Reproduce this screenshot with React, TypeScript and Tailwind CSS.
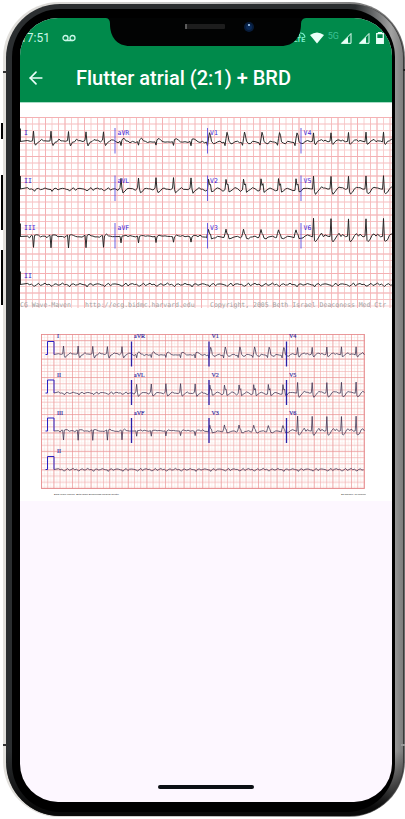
import { ArrowLeft } from "lucide-react";

type Point = [number, number];

// one beat per lead: x offset from the R wave, height above the baseline
const BEATS: Record<string, Point[]> = {
  I: [[-6, 1], [-3, 0], [-1, 1], [0, 10], [1, -1], [2, -4], [4, -1], [6, 0], [8, 2], [10, 1]],
  aVR: [[-6, 0], [-3, -1], [-1, 0], [0, -4], [1, 2], [3, 3], [5, 1], [7, 0], [9, -1]],
  V1: [[-6, 0], [-4, -1], [-2, -1], [-1, -4], [0, 3], [1, 9], [2, 6], [3, 0], [5, -2], [7, -2], [9, 0]],
  V4: [[-6, 1], [-3, 0], [-1, 0], [0, 9], [1, -2], [2, -3], [4, 0], [6, 1], [8, 2], [10, 0]],
  II: [[-6, 1], [-4, 0], [-2, 0], [0, -1], [1, -2], [3, 0], [5, 1], [7, -1], [9, 0]],
  aVL: [[-6, 0], [-3, -1], [-1, 1], [0, 11], [1, 0], [2, -4], [4, -2], [6, 0], [8, 1], [10, 0]],
  V2: [[-6, 0], [-3, -2], [-1, -1], [0, 10], [1, 4], [2, 5], [3, -3], [5, -2], [7, 0], [9, 1]],
  V5: [[-6, 1], [-3, 0], [-1, 0], [0, 13], [1, -3], [2, -5], [4, -3], [6, 0], [8, 2], [10, 1]],
  III: [[-6, 0], [-4, -1], [-2, 1], [-1, 1], [0, -11], [1, 1], [3, 2], [5, 1], [7, 0], [9, 0]],
  aVF: [[-6, 0], [-3, 0], [-1, 0], [0, -6], [1, 0], [3, 1], [5, 1], [7, 0], [9, 1]],
  V3: [[-6, 0], [-3, -1], [-2, -1], [-1, 3], [0, 7], [1, 3], [2, 2], [3, -2], [5, -2], [7, -1], [9, 0]],
  V6: [[-6, 2], [-3, 0], [-1, 0], [0, 18], [1, -4], [2, -5], [4, -3], [6, 1], [8, 3], [10, 0]],
};

const ROWS = [
  ["I", "aVR", "V1", "V4"],
  ["II", "aVL", "V2", "V5"],
  ["III", "aVF", "V3", "V6"],
  ["II", "II", "II", "II"],
];

const BEAT_GAP = 35;
const BEAT_COUNT = 21;

function leadIndex(beat: number) {
  if (beat < 5) return 0;
  if (beat < 10) return 1;
  if (beat < 16) return 2;
  return 3;
}

// first = x of the first R wave, base = y of the baseline
function tracePoints(row: number, start: number, first: number, base: number, sx: number, sy: number) {
  const points = [`${start},${base}`];
  for (let i = 0; i < BEAT_COUNT; i++) {
    BEATS[ROWS[row][leadIndex(i)]].forEach(([dx, dy], j) => {
      const wobble = Math.sin(i * 5.3 + j * 2.7 + row) * 0.8;
      const x = first + (i * BEAT_GAP + dx * 2) * sx;
      const y = base - (dy * 2 + wobble) * sy;
      points.push(`${x.toFixed(1)},${y.toFixed(1)}`);
    });
  }
  return points.join(" ");
}

function range(from: number, to: number, step: number) {
  const out: number[] = [];
  for (let v = from; v <= to; v += step) out.push(v);
  return out;
}

function WaveMavenStrip() {
  const bases = [49, 144, 239, 335];
  const splits = [190, 375, 562];
  return (
    <svg viewBox="0 0 744 384" className="block w-full" role="img" aria-label="ECG">
      <g stroke="#f9cfcf" strokeWidth="2">
        {range(12, 744, 13).map((x) => <path key={`v${x}`} d={`M${x} 0V382`} />)}
        {range(1, 384, 13).map((y) => <path key={`h${y}`} d={`M0 ${y}H744`} />)}
      </g>
      <g stroke="#f2a4a8" strokeWidth="2" opacity="0.7">
        {range(12, 744, 39).map((x) => <path key={`v${x}`} d={`M${x} 0V382`} />)}
        {range(38, 744, 39).map((x) => <path key={`w${x}`} d={`M${x} 0V382`} opacity="0.5" />)}
        {range(1, 384, 39).map((y) => <path key={`h${y}`} d={`M0 ${y}H744`} />)}
        {range(14, 384, 39).map((y) => <path key={`g${y}`} d={`M0 ${y}H744`} opacity="0.4" />)}
      </g>
      {bases.map((base, row) => (
        <g key={base}>
          <path d={`M1 ${base - 26}V${base}`} stroke="#333" strokeWidth="2" />
          <polyline points={tracePoints(row, 0, 27, base, 1, 1)} fill="none" stroke="#222" strokeWidth="1.9" />
          {row < 3 && splits.map((x) => (
            <path key={x} d={`M${x} ${base - 27}v51`} stroke="#5547e0" strokeWidth="2" opacity="0.85" />
          ))}
          <g fill="#3b22d6" fontFamily="DejaVu Sans Mono, monospace" fontSize="13">
            <text x="8" y={base - 13}>{ROWS[row][0]}</text>
            {row < 3 && splits.map((x, i) => (
              <text key={x} x={x + 5} y={base - 13}>{ROWS[row][i + 1]}</text>
            ))}
          </g>
        </g>
      ))}
      <g fill="#a3a3a3" fontFamily="DejaVu Sans Mono, monospace" fontSize="13">
        <text x="0" y="380">CG Wave-Maven</text>
        <text x="130" y="380">http://ecg.bidmc.harvard.edu</text>
        <text x="380" y="380">Copyright, 2005 Beth Israel Deaconess Med Ctr</text>
      </g>
    </svg>
  );
}

function PaperStrip() {
  const bases = [41, 118, 194, 271];
  const splits = [181, 336, 491];
  return (
    <svg viewBox="0 0 650 326" className="block w-full" role="img" aria-label="ECG">
      <g stroke="#fbe6e2" strokeWidth="1">
        {range(7, 648, 6.2).map((x) => <path key={`v${x}`} d={`M${x} 1V309`} />)}
        {range(7, 309, 6.2).map((y) => <path key={`h${y}`} d={`M1 ${y}H647`} />)}
      </g>
      <g stroke="#f3aeae" strokeWidth="1.6">
        {range(1, 648, 12.4).map((x) => <path key={`v${x}`} d={`M${x} 1V309`} opacity="0.75" />)}
        {range(1, 309, 12.3).map((y) => <path key={`h${y}`} d={`M1 ${y}H647`} opacity="0.75" />)}
      </g>
      <g stroke="#e88a8c" strokeWidth="1.6">
        {range(25.8, 648, 37.2).map((x) => <path key={`v${x}`} d={`M${x} 1V309`} opacity="0.4" />)}
        {range(13.3, 309, 36.9).map((y) => <path key={`h${y}`} d={`M1 ${y}H647`} opacity="0.5" />)}
      </g>
      <rect x="1" y="1" width="646" height="308" fill="none" stroke="#e58b8d" strokeWidth="1.6" />
      {bases.map((base, row) => (
        <g key={base}>
          <polyline points={tracePoints(row, 26, 45, base, 0.836, 0.82)} fill="none" stroke="#3a2d4d" strokeWidth="1.5" />
          <path d={`M9 ${base}H13V${base - 26}H26V${base}`} fill="none" stroke="#2a22c4" strokeWidth="2" />
          {row < 3 && splits.map((x) => (
            <path key={x} d={`M${x} ${base - 26}v50`} stroke="#2a1ea8" strokeWidth="2.6" />
          ))}
          <g fill="#2c1f9e" stroke="#2c1f9e" strokeWidth="0.3" fontFamily="Liberation Serif, serif" fontSize="12">
            <text x="32" y={base - 33}>{ROWS[row][0]}</text>
            {row < 3 && splits.map((x, i) => (
              <text key={x} x={x + 5} y={base - 33}>{ROWS[row][i + 1]}</text>
            ))}
          </g>
        </g>
      ))}
      <g fill="#222" fontFamily="Liberation Sans, sans-serif" fontSize="5">
        <text x="26" y="321">ECG Wave-Maven, Beth Israel Deaconess Medical Center</text>
        <text x="600" y="321">25 mm/sec, 10 mm/mV</text>
      </g>
    </svg>
  );
}

function StatusIcons() {
  return (
    <div className="flex items-center text-[#eafff8]">
      <div className="font-['Roboto',sans-serif] text-[7px] leading-[7px] font-bold text-[#7df0cf]">
        <svg viewBox="0 0 12 5" className="ml-auto h-[5px] w-3" fill="none" stroke="currentColor" strokeWidth="1.2">
          <path d="M2 1q4 0 4 4M6 1q4 0 5 4" />
        </svg>
        LTE
      </div>
      <svg viewBox="0 0 14 12" className="ml-1 h-3 w-3.5" fill="currentColor">
        <path d="M0 3Q7-2 14 3L7 11.500Z" />
      </svg>
      <span className="ml-1 h-4 font-['Roboto',sans-serif] text-[9px] leading-3 text-[#3cc296]">5G</span>
      <div className="ml-px flex gap-1.5">
        {[0, 1].map((n) => (
          <svg key={n} viewBox="0 0 12 12" className="size-3" fill="none" stroke="currentColor">
            <path d="M1.500 11.300H11V1.500Z" />
            <path d="M1 11.500H8V5Z" fill="currentColor" stroke="none" />
          </svg>
        ))}
        <svg viewBox="0 0 8 12" className="h-3 w-2" fill="none" stroke="currentColor">
          <path d="M2.500 1V0.500H5.500V1M0.700 1.700H7.300V11.300H0.700Z" strokeWidth="1.300" />
          <path d="M1 6H7V11H1Z" fill="currentColor" stroke="none" />
        </svg>
      </div>
    </div>
  );
}

function Notch() {
  return (
    <div className="absolute inset-x-0 top-0 flex justify-center">
      <svg viewBox="0 0 200 29" className="h-[29px] w-[200px]">
        <path d="M0-1V0Q4 0.500 4 6C4 19 11 28 24 28H175C188 28 195 19 195 6Q195 0.500 200 0V-1Z" fill="#020303" />
        <rect x="79" y="6" width="40" height="5" rx="1" fill="#1d1d1d" />
        <path d="M80 6V11" stroke="#999" strokeWidth="1" />
        <circle cx="143" cy="9" r="5" fill="#081c3a" />
        <circle cx="143" cy="9" r="3" fill="#0a2a58" />
        <circle cx="143" cy="7" r="1" fill="#b9dcff" />
      </svg>
    </div>
  );
}

export default function App() {
  return (
    <div className="relative flex min-h-screen flex-col bg-white pt-0.5 pb-0.5 pl-[3px]">
      {/* side buttons */}
      <div className="absolute top-[123px] left-px h-4 w-0.5 bg-black" />
      <div className="absolute top-[175px] left-px h-[55px] w-0.5 bg-black" />
      <div className="absolute top-[250px] left-px h-[55px] w-0.5 bg-black" />

      {/* antenna lines */}
      <div className="absolute top-[71px] left-[3px] h-0.5 w-1 bg-[#333]" />
      <div className="absolute top-[69px] right-0 h-0.5 w-0.5 bg-[#222]" />
      <div className="absolute bottom-[73px] left-[3px] h-0.5 w-1 bg-[#333]" />
      <div className="absolute right-0 bottom-[73px] h-0.5 w-1 bg-[#999]" />

      {/* metal rim, then glass edge, then bezel */}
      <div className="flex flex-1 flex-col rounded-[56px] bg-linear-to-r from-[#e2e0dc] via-[#c4c4c4] to-[#6c6c6c] pt-0.5 pr-px pb-px pl-[3px]">
        <div className="flex flex-1 flex-col rounded-[54px] border-r border-[#3a3a3a] bg-[linear-gradient(to_top,#0a0a0a_1%,transparent_8%),linear-gradient(to_right,#2b2e30_88%,#a2a2a2_97%,#7d7d7d_100%)] pt-[5px] pr-2 pb-1 pl-[6px]">
          <div className="flex flex-1 flex-col rounded-[48px] bg-black pt-[9px] pr-[3px] pb-[10px] pl-2">
            <div className="relative flex flex-1 flex-col overflow-hidden rounded-[38px] bg-[#fdf7ff]">
              <Notch />
              <header className="bg-[#008a4b] font-['Roboto',sans-serif] text-[#eafffa]">
                <div className="flex h-10 items-center justify-between pr-2">
                  <div className="flex items-center">
                    <span className="text-xs text-[#c9f7e8]">17:51</span>
                    <svg viewBox="0 0 14 8" className="ml-3 h-2 w-3.5" fill="none" stroke="#c9f7e8" strokeWidth="1.300">
                      <circle cx="3.500" cy="4" r="2.500" />
                      <circle cx="10.500" cy="4" r="2.500" />
                      <path d="M3.500 6.500H10.500" />
                    </svg>
                  </div>
                  <StatusIcons />
                </div>
                <div className="flex h-11 items-center pb-1 pl-1.5">
                  <button aria-label="Back" className="flex size-5 items-center justify-center">
                    <ArrowLeft size={20} strokeWidth={2} />
                  </button>
                  <h1 className="ml-[30px] text-xl font-medium whitespace-nowrap text-white">Flutter atrial (2:1) + BRD</h1>
                </div>
              </header>

              <main className="border-t border-[#a8dcc6] bg-white pt-3.5">
                <WaveMavenStrip />
                <div className="pt-[25px] pr-[26px] pb-1 pl-[21px]">
                  <PaperStrip />
                </div>
              </main>

              {/* home bar */}
              <div className="mt-auto flex justify-center pb-[13px]">
                <div className="h-1 w-24 rounded-full bg-[#0b0f14]" />
              </div>
            </div>
          </div>
        </div>
      </div>
    </div>
  );
}
